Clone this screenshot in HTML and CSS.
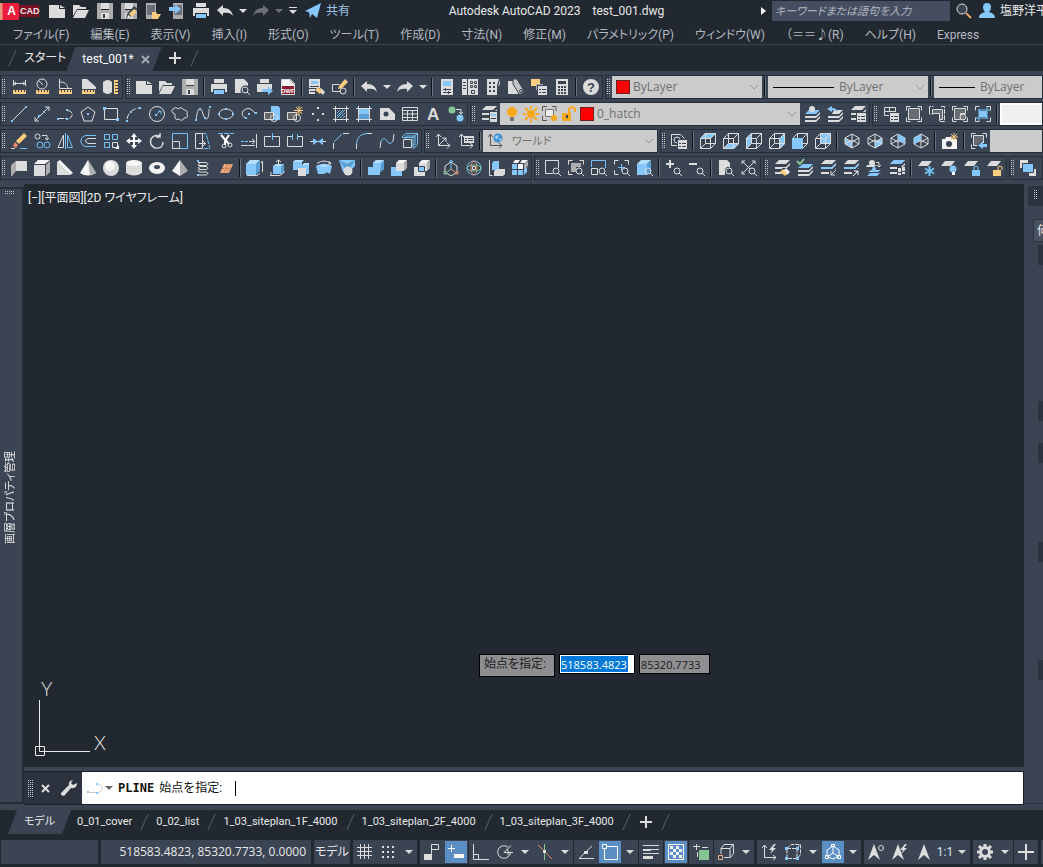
FILE: index.html
```html
<!DOCTYPE html>
<html lang="ja">

<head>
    <meta charset="utf-8">
    <title>Autodesk AutoCAD 2023 - test_001.dwg</title>
    <link rel="stylesheet" href="styles.css">
</head>

<body>
    <!-- shared icon parts -->
    <svg class="defs" aria-hidden="true">
        <defs>
            <path id="new" class="w" d="M0 2h10v4h6v9H0zM11 2l5 3h-5z"/>
            <path id="open" class="w" d="M0 13V2h6l2 2h5v2H4zM4 7h12l-4 8H0z"/>
            <g id="save"><path class="g" d="M0 0h4v7h8V0h4v16H0z"/><path class="w" d="M4 0h8v6H4zM4 10h8v6H4z"/><path class="k" d="M6 11h2v4H6z"/></g>
            <g id="print"><path class="w" d="M3 0h10v4H3zM0 5h16v8h-2v-3H2v3H0z"/><path class="bf" d="M3 11h10v4H3z"/></g>
            <path id="undo" class="w" d="M0 7l6-5v3c6 0 9 3 10 8-2-3-5-4-10-3v3z"/>
            <path id="redo" class="w" d="M16 7l-6-5v3C4 5 1 8 0 13c2-3 5-4 10-3v3z"/>
            <path id="drop" class="w" d="M0 6h8l-4 4z"/>
            <g id="mag"><circle cx="11" cy="11" r="3"/><path d="M13 13l3 3"/></g>
            <path id="slab" d="M1 6h11l4-4v2l-4 4H1z"/>
            <g id="layers" class="w"><path d="M5 0h11l-4 4H1z"/><use href="#slab" y="1"/><use href="#slab" y="6"/></g>
            <path id="corners" d="M.5 4.500v-4h4M11.500.5h4v4M15.500 11.500v4h-4M4.500 15.500h-4v-4"/>
            <g id="panel"><path class="k" d="M6 6h10v10H6z"/><path class="w" d="M7 7h9v9H7z"/><path class="k" d="M8 10h2v1H8zM11 10h4v1h-4zM8 13h2v1H8zM11 13h4v1h-4z"/></g>
            <path id="wire" d="M.5 5.500h10v10H.5zM5.500.5h10v10h-10zM.5 5.500l5-5M10.500 5.500l5-5M.5 15.500l5-5M10.500 15.500l5-5"/>
            <path id="iso" d="M8 1l7 4v6l-7 4-7-4V5zM1 5l7 4 7-4M8 9v6M1 11l7-4 7 4M8 7V1"/>
            <g id="solid"><path class="w" d="M0 5h11v11H0z"/><path class="l" d="M0 4l4-4h12l-5 4z"/><path class="g" d="M12 5l4-4v11l-4 4z"/></g>
            <g id="bluesolid"><path class="bf" d="M0 4h10v11H0z"/><path class="b2" d="M0 4l4-4h10l-4 4z"/><path class="b3" d="M10 4l4-4v11l-4 4z"/></g>
            <path id="ruler" class="o" d="M2 11h13v4H2z"/>
            <path id="ticks" class="s" d="M4.500 11v2M7.500 11v2M10.500 11v2M13.500 11v2"/>
            <g id="pencil"><path class="k" d="M6 11l7-8 4 3-8 9-4 1z"/><path class="o" d="M8 11l5-5 3 2-5 6z"/><path class="l" d="M7 12l3 2-4 2z"/></g>
            <path id="bolt" class="w" d="M13 0L8 6h3l-2 4 6-6h-3l3-4z"/>
            <path id="anno" class="w" d="M8 0l6 16-6-5-6 5z"/>
        </defs>
    </svg>

    <header class="titlebar">
        <div class="logo"><b>A</b><span>CAD</span></div>
        <nav class="quick" aria-label="クイック アクセス">
            <button title="新規"><svg><use href="#new"/></svg></button>
            <button title="開く"><svg><use href="#open"/></svg></button>
            <button title="上書き保存"><svg><use href="#save"/></svg></button>
            <button title="名前を付けて保存"><svg><use href="#save"/><use href="#pencil"/></svg></button>
            <button title="Web から開く"><svg><path class="g" d="M1 0h10v16H1z"/><path fill="#6b6f77" stroke="none" d="M2 2h8v10H2z"/><path class="o" d="M7 9h4l1 2h4l-3 5H7z"/></svg></button>
            <button title="Web に保存"><svg><path class="g" d="M4 0h10v16H4z"/><path fill="#6b6f77" stroke="none" d="M5 2h8v10H5z"/><path class="bf" d="M0 4h6V1l6 5-6 5V8H0z"/></svg></button>
            <button title="印刷"><svg><use href="#print"/></svg></button>
            <button title="元に戻す"><svg><use href="#undo"/></svg></button>
            <button class="mini" title="元に戻す履歴"><svg><use href="#drop"/></svg></button>
            <button class="dim" title="やり直し"><svg><use href="#redo"/></svg></button>
            <button class="mini dim" title="やり直し履歴"><svg><use href="#drop"/></svg></button>
            <button class="mini custom" title="カスタマイズ"><svg><path d="M0 4.500h8"/><path class="w" d="M0 7h8l-4 4z"/></svg></button>
            <button class="share"><svg><path class="bf" d="M0 8l16-8-4 15-5-4-2 4-1-6 9-6-7 7z"/></svg>共有</button>
        </nav>
        <h1><span>Autodesk AutoCAD 2023</span><span>test_001.dwg</span></h1>
        <button class="tri" title="検索を閉じる"><svg><path class="l" d="M0 4l5 4-5 4z"/></svg></button>
        <input class="search" type="text" aria-label="検索" placeholder="キーワードまたは語句を入力">
        <button title="検索"><svg><circle cx="6" cy="6" r="5" fill="#3b4453"/><path stroke="#e8a36a" stroke-width="2" d="M10 10l5 5"/></svg></button>
        <button class="user"><svg><path class="bf" d="M8 0c3 0 4 2 4 4s-1 4-2 5c3 1 6 2 6 6H0c0-4 3-5 6-6-1-1-2-3-2-5s1-4 4-4z"/></svg>塩野洋平</button>
    </header>

    <nav class="menu" aria-label="メニュー">
        <a href="#">ファイル(F)</a><a href="#">編集(E)</a><a href="#">表示(V)</a><a href="#">挿入(I)</a><a href="#">形式(O)</a><a href="#">ツール(T)</a><a href="#">作成(D)</a><a href="#">寸法(N)</a><a href="#">修正(M)</a><a href="#">パラメトリック(P)</a><a href="#">ウィンドウ(W)</a><a href="#">（＝＝♪(R)</a><a href="#">ヘルプ(H)</a><a href="#">Express</a>
    </nav>

    <nav class="filetabs" aria-label="図面">
        <i class="slash"></i>
        <a href="#">スタート</a>
        <div class="current"><a href="#">test_001*</a><button title="閉じる"><svg class="s10"><path stroke-width="2" d="M1 1l7 7M8 1L1 8"/></svg></button></div>
        <button class="plus" title="新しい図面"><svg class="s12"><path stroke-width="2" d="M6 0v12M0 6h12"/></svg></button>
        <i class="slash"></i>
    </nav>

    <section class="toolbars">
        <div class="row">
            <div class="bar">
                <i class="grip"></i>
                <button title="距離"><svg><path d="M2.500 1v6M14.500 1v6M3 4.500h11M5 3L3 4.500 5 6M12 3l2 1.500L12 6"/><use href="#ruler"/><use href="#ticks"/></svg></button>
                <button title="半径"><svg><circle cx="8" cy="5" r="5"/><path d="M4 1l5 5"/><use href="#ruler"/><use href="#ticks"/></svg></button>
                <button title="角度"><svg><path d="M2.500 0v9.500H15M3 3c5 0 7 2 8 6"/><use href="#ruler"/><use href="#ticks"/></svg></button>
                <button title="面積"><svg><path class="w" d="M2 0l5 0 9 8v2H2z"/><use href="#ruler"/><use href="#ticks"/></svg></button>
                <button title="体積"><svg><path class="w" d="M0 3q5-4 9 0v10q-4 4-9 0z"/><path class="o" d="M11 1h4v14h-4z"/><path class="s" d="M12 3.500h3M12 6.500h3M12 9.500h3M12 12.500h3"/></svg></button>
            </div>
            <div class="bar">
                <i class="grip"></i>
                <button title="新規作成"><svg><use href="#new"/></svg></button>
                <button title="開く"><svg><use href="#open"/></svg></button>
                <button title="保存"><svg><use href="#save"/></svg></button>
                <i class="sep"></i>
                <button title="印刷"><svg><use href="#print"/></svg></button>
                <button title="印刷プレビュー"><svg><path class="w" d="M1 0h9l4 4v3q-4-2-7 2-1 3 0 5H1z"/><use href="#mag"/></svg></button>
                <button title="パブリッシュ"><svg><path class="w" d="M3 0h9v4H3zM0 5h15v5H8v3H0z"/><path class="bf" d="M5 10h6V7l5 5-5 4v-3H5z"/></svg></button>
                <button title="3D DWF"><svg><path fill="#8b1c30" stroke="#d8d8d8" d="M1.500.5h9l4 4v11h-13z"/><path class="l" d="M2 1h8l4 4v2H2z"/><text x="1" y="14" class="dwf">DWF</text></svg></button>
                <i class="sep"></i>
                <button title="プロパティコピー"><svg><path class="w" d="M0 0h11v9H0zM0 10h6v5H0z"/><path class="bf" d="M2 2h7v3H2z"/><path class="k" d="M1 7h9v1H1zM1 12h5v1H1z"/><path class="w" d="M12 9l4 4-2 3-5-5z"/><path class="o" d="M9 8l4 4-2 3-5-4z"/></svg></button>
                <button title="ブロックエディタ"><svg><path d="M.5 5.500h7M.5 5.500v7h8"/><circle cx="11" cy="12" r="3"/><path class="o" d="M7 7l6-7 3 3-6 6-4 1z"/></svg></button>
                <i class="sep"></i>
                <button title="元に戻す"><svg><use href="#undo"/></svg></button>
                <button class="thin" title="履歴"><svg><use href="#drop"/></svg></button>
                <button title="やり直し"><svg><use href="#redo"/></svg></button>
                <button class="thin" title="履歴"><svg><use href="#drop"/></svg></button>
                <i class="sep"></i>
                <button title="プロパティ管理"><svg><path class="w" d="M2 0h12v16H2z"/><path class="bf" d="M4 2h8v5H4z"/><path class="s" d="M4 10.500h8M4 13.500h8M6.500 9v3M9.500 12v3"/></svg></button>
                <button title="DesignCenter"><svg><path class="w" d="M0 0h5v16H0zM6 0h10v16H6z"/><path class="k" d="M1 3h3v1H1zM1 6h3v1H1zM1 9h3v1H1z"/><path class="s" d="M8.500 2.500h2v2h-2zM12.500 2.500h2v2h-2zM8.500 6.500h2v2h-2zM12.500 6.500h2v2h-2zM9.500 11.500h3v3h-3z"/></svg></button>
                <button title="ツールパレット"><svg><path class="w" d="M2 0h12l-2 6v10H2zM13 8l2-3v-4z"/><path class="k" d="M4 3h2v2H4zM8 3h2v2H8zM4 7h2v2H4zM8 7h2v2H8zM4 11h2v2H4zM8 11h2v2H8z"/></svg></button>
                <button title="シートセット"><svg><path class="w" d="M0 2h5l9 13H0z"/><path fill="#c4c4c4" stroke="#3b4453" d="M5 0l4 0 7 12-2 3-3 0-6-10z"/><circle cx="13" cy="12" r="1.500" class="s"/></svg></button>
                <button title="マークアップ"><svg><path class="o" d="M0 0h9v7H0z"/><path class="g" d="M5 5h7v6H5z"/><use href="#panel"/></svg></button>
                <button title="計算機"><svg><path class="w" d="M2 0h12v16H2z"/><path class="k" d="M4 2h8v3H4zM4 7h2v2H4zM7 7h2v2H7zM10 7h2v2h-2zM4 10h2v2H4zM7 10h2v2H7zM10 10h2v2h-2zM4 13h2v2H4zM7 13h2v2H7zM10 13h2v2h-2z"/></svg></button>
                <i class="sep"></i>
                <button title="ヘルプ"><svg><circle class="w" cx="8" cy="8" r="8"/><text x="4" y="13" class="help">?</text></svg></button>
            </div>
            <div class="bar grow">
                <i class="grip"></i>
                <div class="combo c150"><i class="swatch"></i><select aria-label="色"><option>ByLayer</option></select><svg class="chev"><path d="M0 1l4 4 4-4"/></svg></div>
                <i class="sep"></i>
                <div class="combo c160"><i class="ltype"></i><select aria-label="線種"><option>ByLayer</option></select><svg class="chev"><path d="M0 1l4 4 4-4"/></svg></div>
                <i class="sep"></i>
                <div class="combo grow"><i class="ltype short"></i><select aria-label="線の太さ"><option>ByLayer</option></select></div>
            </div>
        </div>

        <div class="row">
            <div class="bar">
                <i class="grip"></i>
                <button title="線分"><svg><path d="M2 14L14 2"/><path class="bf" d="M0 14h2v2H0zM14 0h2v2h-2z"/></svg></button>
                <button title="構築線"><svg><path d="M1 15L15 1M1 11v4h4M11 1h4v4"/><path class="bf" d="M4 9h2v2H4zM9 5h2v2H9z"/></svg></button>
                <button title="ポリライン"><svg><path d="M2 12.500h8M11 4.500q5 1 4 5-1 3-4 3" stroke-dasharray="5 1"/><path class="bf" d="M0 12h2v2H0zM9 12h2v2H9zM9 3h2v2H9z"/></svg></button>
                <button title="ポリゴン"><svg><path d="M8 1l7 5-3 9H4L1 6z"/><path class="bf" d="M7 7h2v2H7z"/></svg></button>
                <button title="長方形"><svg><path d="M1.500 2.500h13v11h-13z"/><path class="bf" d="M0 1h3v3H0zM13 12h3v3h-3z"/></svg></button>
                <button title="円弧"><svg><path d="M1 13Q3 3 14 2" stroke-dasharray="6 2"/><path class="bf" d="M0 14h2v2H0zM4 5h2v2H4zM13 1h2v2h-2z"/></svg></button>
                <button title="円"><svg><circle cx="8" cy="8" r="7.500"/><path class="b" d="M7 9l4-4M9 5h3v3"/><path class="bf" d="M6 8h2v2H6z"/></svg></button>
                <button title="雲マーク"><svg><path d="M3 8Q-2 6 1 3q3-3 5 0 3-3 6 1 4 0 3 4 2 4-3 4-2 4-5 1-5 2-4-5z"/></svg></button>
                <button title="スプライン"><svg><path d="M1 14C3-1 6 1 8 8s6 8 6-5"/><path class="bf" d="M0 13h2v2H0zM4 2h2v2H4zM9 11h2v2H9zM14 0h2v2h-2z"/></svg></button>
                <button title="楕円"><svg><ellipse cx="8" cy="8" rx="7" ry="5"/><path class="bf" d="M0 7h2v2H0zM14 7h2v2h-2zM7 2h2v2H7zM7 12h2v2H7z"/></svg></button>
                <button title="楕円弧"><svg><path d="M5 12Q-1 10 2 5q6-6 12 2"/><path class="bf" d="M7 7h2v2H7zM4 11h2v2H4zM14 6h2v2h-2z"/></svg></button>
                <button title="ブロック挿入"><svg><path class="bf" d="M7 0h7l2 2v12h-9z"/><path d="M.5 6.500h9v7h-9z" fill="#666"/><circle cx="10" cy="12" r="3.500"/></svg></button>
                <button title="ブロック作成"><svg><path d="M.5 6.500h9v7h-9z" fill="#666"/><circle cx="10" cy="12" r="3.500"/><path class="os" d="M12 0v9M7 4.500h9M9 1l6 7M15 1L9 8"/></svg></button>
                <button title="点"><svg><path class="w" d="M7 1h2v2H7zM2 7h2v2H2zM12 7h2v2h-2zM7 13h2v2H7z"/></svg></button>
                <button title="ハッチング"><svg><path d="M2.500 0v16M13.500 0v16M0 2.500h16M0 13.500h16"/><path class="b" d="M4 7l3-3M4 10l6-6M4 12l8-8M7 12l5-5M10 12l2-2"/></svg></button>
                <button title="グラデーション"><svg><path class="bf" d="M3 3h10v5H3z"/><path class="b3" d="M3 8h10v5H3z"/><path d="M2.500 0v16M13.500 0v16M0 2.500h16M0 13.500h16"/></svg></button>
                <button title="リージョン"><svg><path class="w" d="M1 2h9l6 6v6H1z"/><circle class="k" cx="7" cy="8" r="2.500"/></svg></button>
                <button title="表"><svg><path d="M.5 1.500h15v13H.5zM0 4.500h16M0 8h16M0 11.500h16M5.500 4v10M10.500 4v10" /></svg></button>
                <button title="マルチテキスト"><svg><text x="2" y="14" class="mtext">A</text></svg></button>
                <button title="選択して追加"><svg><circle cx="4" cy="4" r="3.500" fill="#86c692" stroke="none"/><circle class="bf" cx="12" cy="12" r="3.500"/><path d="M8 3.500h5V7M11 6l2 2 2-2"/></svg></button>
            </div>
            <div class="bar">
                <i class="grip"></i>
                <button title="画層プロパティ管理"><svg><use href="#layers"/><path class="k" d="M8 5h8v11H8z"/><path class="w" d="M9 6h7v10H9z"/><path class="bf" d="M10 8h5v2h-5z"/><path class="k" d="M10 12h5v1h-5z"/></svg></button>
                <div class="combo layer">
                    <svg><circle cx="8" cy="6" r="5" fill="#f8a81c" stroke="none"/><path fill="#777" stroke="none" d="M6 11h4v4H6z"/></svg>
                    <svg><circle cx="8" cy="8" r="4" fill="#f8a81c" stroke="none"/><path stroke="#f8a81c" stroke-width="2" d="M8 0v3M8 13v3M0 8h3M13 8h3M2 2l3 3M11 11l3 3M14 2l-3 3M5 11l-3 3"/></svg>
                    <svg><path stroke="#555" d="M.5 5V.5H5M10 .5h4V5M.5 10v4.500H5"/><path fill="#eee" stroke="#777" d="M3.500 3.500h8v7h-8z"/><circle cx="12" cy="12" r="3" fill="#f8a81c" stroke="none"/></svg>
                    <svg><path fill="#f8a81c" stroke="none" d="M1 7h9v8H1z"/><path stroke="#f8a81c" stroke-width="2" d="M8 7V3q3-4 6 0v3"/><path class="k" d="M5 9h2v3H5z"/></svg>
                    <i class="swatch"></i><select aria-label="画層"><option>0_hatch</option></select><svg class="chev"><path d="M0 1l4 4 4-4"/></svg>
                </div>
                <button title="現在層に設定"><svg><use class="w" href="#slab" y="4"/><use class="w" href="#slab" y="8"/><path class="bf" d="M5 4h11l-4 4H1z"/><circle class="w" cx="8" cy="3" r="3"/></svg></button>
                <button title="前の画層"><svg><use href="#slab" class="w" y="4"/><use href="#slab" class="w" y="8"/><path class="w" d="M7 4h9l-4 4H5z"/><path class="bf" d="M0 3l5-3v2q5 0 5 4-2-2-5-2v2z"/></svg></button>
                <button title="画層状態管理"><svg><use href="#layers"/><use href="#panel"/></svg></button>
            </div>
            <div class="bar grow">
                <i class="grip"></i>
                <button title="ビューポート管理"><svg><path d="M1.500 1.500h11v8h-11zM6.500 2v8M2 5.500h11"/><use href="#panel"/></svg></button>
                <button title="単一ビューポート"><svg><use href="#corners"/><path d="M2.500 2.500h11v11h-11z" fill="#666b73"/></svg></button>
                <button title="ポリゴンビューポート"><svg><path d="M.5 4V.5h4M12 .5h3.500v15h-5v-4M.5 4V8h4" stroke-dasharray="5 1"/><path d="M3.500 3.500h10v10h-3v-6h-7z" fill="#666b73"/></svg></button>
                <button title="オブジェクト変換"><svg><use href="#corners"/><path d="M2.500 2.500h11v5h-5v6h-6z" fill="#666b73"/><circle cx="11" cy="11" r="3" fill="#777"/></svg></button>
                <button title="ビューポートクリップ"><svg><use href="#corners"/><path class="bf" d="M4 5h8v6H4z"/><path class="b" d="M3 4h12M1 12h12M4 3v12M12 1v12"/></svg></button>
                <i class="sep"></i>
                <input class="scale" type="text" aria-label="尺度">
            </div>
        </div>

        <div class="row">
            <div class="bar">
                <i class="grip"></i>
                <button title="削除"><svg><path class="o" d="M13 0l3 3-8 8-3-3z"/><path fill="#e9896a" stroke="none" d="M4 9l3 3-2 3-3-2z"/><path class="b" d="M9 15.500h7"/><path d="M0 15.500h4"/></svg></button>
                <button title="複写"><svg><circle cx="3.500" cy="3.500" r="2.500"/><circle class="b" cx="6" cy="12" r="3"/><circle class="b" cx="13" cy="12" r="3"/><path d="M8 2.500h5V6M11 5l2 2 2-2"/></svg></button>
                <button title="鏡像"><svg><path d="M6.500 2v12.500H1z"/><path class="b" d="M8.500 0v16M10.500 2v12.500h5z"/></svg></button>
                <button title="オフセット"><svg><path class="b" d="M16 2.500H6q-5 1-5 5.500t5 5.500h10"/><path d="M16 5.500H8q-5 2.500 0 5h8"/></svg></button>
                <button title="配列複写"><svg><path class="b" d="M1.500 1.500h5v5h-5zM9.500 1.500h5v5h-5zM1.500 9.500h5v5h-5z"/><path d="M9.500 9.500h5v5h-5z"/><path class="l" d="M16 12v4h-4z"/></svg></button>
                <button title="移動"><svg><path class="l" d="M8 0l3 4H5zM8 16l3-4H5zM0 8l4-3v6zM16 8l-4-3v6z"/><path stroke="#fff" stroke-width="2" d="M8 3v10M3 8h10"/></svg></button>
                <button title="回転"><svg><path stroke-width="1.500" d="M11 3Q5 1 2 6q-2 6 4 9 8 1 8-6M11 0v4H7"/></svg></button>
                <button title="尺度変更"><svg><path class="b" d="M.5 8V.5h15v15H8"/><path d="M.5 8.500h7v7h-7z"/></svg></button>
                <button title="ストレッチ"><svg><path d="M.5.5h7v15h-7zM4 10.500h6M8 8l2.500 2.500L8 13"/><path class="b" d="M8 .5h3l4 15H8" stroke-dasharray="4 1"/></svg></button>
                <button title="トリム"><svg><path class="b" d="M0 .5h16" stroke-dasharray="5 1"/><path stroke="#fff" stroke-width="2" d="M3 2l8 9M11 2L7 8v4"/><circle cx="12" cy="12" r="2"/><circle cx="6" cy="13" r="2"/></svg></button>
                <button title="延長"><svg><path d="M15.500 1v14M8 8.500h6M11 6l3 2.500L11 11M0 12.500h14" /><path class="b" d="M0 8.500h8" stroke-dasharray="3 1"/></svg></button>
                <button title="点で部分削除"><svg><path d="M7 3.500H.5v10h15v-10H9"/><path class="b" d="M8.500 0v7"/></svg></button>
                <button title="部分削除"><svg><path d="M5 3.500H.5v10h15v-10H11"/><path class="b" d="M5.500 1v6M10.500 1v6"/></svg></button>
                <button title="結合"><svg><path d="M0 8.500h16"/><path class="bf" d="M3 5l5 3.500L3 12zM13 5L8 8.500l5 3.500z"/></svg></button>
                <button title="面取り"><svg><path class="b" d="M1 9l8-8"/><path d="M.5 10v6M10 .5h6"/></svg></button>
                <button title="フィレット"><svg><path class="b" d="M.5 11Q1 1 11 .5"/><path d="M.5 11v5M11 .5h5"/></svg></button>
                <button title="ブレンド"><svg><path class="b" d="M2 8q3-5 6 0t6 0"/><path d="M1 15l1-7M14 8l1-7"/></svg></button>
                <button title="分解"><svg><path d="M1.500 6.500h8v8h-8z"/><path class="b" d="M0 4.500h11v11M0 4l4-3.500h11.500v11l-4 4M11 4.500l4.500-4M4 6V3h9v9h-2"/></svg></button>
            </div>
            <div class="bar">
                <i class="grip"></i>
                <button title="UCS"><svg><path d="M3.500 1v11.500H15M1 4l2.500-3L6 4M12 10l3 2.500-3 3M4 12l6-6M7 5h4v4"/></svg></button>
                <button title="UCS 管理"><svg><path d="M3.500 1v11.500H15M1 4l2.500-3L6 4M12 10l3 2.500-3 3"/><path class="w" d="M6 3h10v7H6z"/><path class="k" d="M7 5h2v1H7zM10 5h5v1h-5zM7 7h2v1H7zM10 7h5v1h-5z"/></svg></button>
                <i class="sep"></i>
                <div class="combo ucs"><svg><path stroke="#555" d="M3.500 1v11.500H15M1 4l2.500-3L6 4M12 10l3 2.500-3 3"/><circle cx="11" cy="5" r="4.500" fill="#3d8fd0" stroke="none"/><path fill="#9bd0f2" stroke="none" d="M8 3l4-1-1 3-2 2zM12 5l3 1-2 3z"/></svg><select aria-label="UCS 名"><option>ワールド</option></select><svg class="chev"><path d="M0 1l4 4 4-4"/></svg></div>
            </div>
            <div class="bar grow">
                <i class="grip"></i>
                <button title="ビュー管理"><svg><path d="M.5 1.500h9l4 4M.5 1.500v11H6"/><circle cx="6" cy="7" r="3"/><use href="#panel"/></svg></button>
                <i class="sep"></i>
                <button title="上面"><svg><path class="bf" d="M0 5l5-5h11l-5 5z"/><use href="#wire"/></svg></button>
                <button title="底面"><svg><path class="bf" d="M0 16l5-5h11l-5 5z"/><use href="#wire"/></svg></button>
                <button title="左側面"><svg><path class="bf" d="M0 5l5-5v11l-5 5z"/><use href="#wire"/></svg></button>
                <button title="右側面"><svg><path class="bf" d="M11 5l5-5v11l-5 5z"/><use href="#wire"/></svg></button>
                <button title="正面"><svg><use href="#wire"/><path class="bf" d="M0 5h11v11H0z"/></svg></button>
                <button title="背面"><svg><path class="bf" d="M5 0h11v11H5z"/><use href="#wire"/></svg></button>
                <i class="sep"></i>
                <button title="南西"><svg><path class="bf" d="M1 5l7 4v6l-7-4z"/><use href="#iso"/></svg></button>
                <button title="南東"><svg><path class="bf" d="M15 5L8 9v6l7-4z"/><use href="#iso"/></svg></button>
                <button title="北東"><svg><use href="#iso"/><path class="bf" d="M8 1l7 4v6L8 7z"/></svg></button>
                <button title="北西"><svg><use href="#iso"/><path class="bf" d="M8 1L1 5v6l7-4z"/></svg></button>
                <i class="sep"></i>
                <button title="カメラ"><svg><path class="l" d="M0 6h3l1-2h5l1 2h5v10H0z"/><circle class="k" cx="7" cy="11" r="3"/><path class="os" d="M12 0v8M8 4h8M9 1l6 6M15 1L9 7"/></svg></button>
                <i class="sep"></i>
                <button title="前のビュー"><svg><use href="#corners"/><path d="M2.500 2.500h10v10h-10z" fill="#666b73"/><path class="k" d="M6 12l6-5v3h4v6H9z"/><path class="bf" d="M16 11h-4V8l-5 4.500 5 3.500v-2h4z"/></svg></button>
                <div class="combo grow"></div>
            </div>
        </div>

        <div class="row">
            <div class="bar">
                <i class="grip"></i>
                <button title="ポリソリッド"><svg><path class="w" d="M5 1h11v10H5z"/><path class="g" d="M0 5l5-4v10l-4 5H0z"/></svg></button>
                <button title="直方体"><svg><use href="#solid"/></svg></button>
                <button title="くさび"><svg><path class="w" d="M0 2l13 13H0z"/><path class="l" d="M0 2l3-2 13 13-3 2z"/></svg></button>
                <button title="円錐"><svg><path class="l" d="M8 0l8 13q-8 5-16 0z"/><path class="g" d="M8 0l8 13q-3 2-6 2z"/></svg></button>
                <button title="球"><svg><circle class="w" cx="8" cy="8" r="8"/><circle class="l" cx="7" cy="6" r="5"/></svg></button>
                <button title="円柱"><svg><path class="w" d="M0 3h16v10q-8 5-16 0z"/><ellipse class="l" cx="8" cy="3" rx="8" ry="3"/></svg></button>
                <button title="トーラス"><svg><ellipse class="l" cx="8" cy="8" rx="8" ry="6"/><ellipse class="k" cx="8" cy="7" rx="3" ry="2"/></svg></button>
                <button title="角錐"><svg><path class="l" d="M8 0v16L0 11z"/><path class="g" d="M8 0l8 11-8 5z"/></svg></button>
                <button title="らせん"><svg><path d="M3 2.500h8q4 2 0 3H5q-4 0 0-2M5 9q-4-1 0-2.500h6q4 2 0 3H5q-4 1 0 2.500h6q4 1 0 3H3"/><path class="bf" d="M2 0h2v2H2zM2 14h2v2H2z"/></svg></button>
                <button title="平面サーフェス"><svg><path fill="#f0a878" stroke="none" d="M6 4h9l-4 9H2z"/><path stroke="#b57355" d="M4 8.500h9M9 4l-3 9M12 4l-3 9" stroke-dasharray="2 1"/></svg></button>
                <i class="sep"></i>
                <button title="押し出し"><svg><use href="#bluesolid" x="-1"/><path d="M15.500 1v11M14 3l1.500-2M0 15.500h10l3-2"/></svg></button>
                <button title="プレス"><svg><path class="bf" d="M3 6h8v8H3z"/><path class="b3" d="M11 6l3-2v8l-3 2z"/><path class="b2" d="M3 6l3-2h8l-3 2z"/><path d="M8.500 5V0M6 2l2.500-2L11 2M0 15.500h10l5-4M1 12v3"/></svg></button>
                <button title="スイープ"><svg><path class="bf" d="M0 2h9v8H0zM7 5h9v9H7z"/><path class="b2" d="M0 2l2-2h9l-2 2zM9 5l2-2h5v2z"/><path class="w" d="M5 8h8v8H5z"/></svg></button>
                <button title="回転"><svg><path class="bf" d="M0 6q8-5 16 0l-2 8q-3-3-6 0l-6 0z"/><path class="b2" d="M3 6q5-3 10 0-5 2-10 0z"/><path d="M1 3.500q7-5 14 0M13 1l2 3-3 0"/></svg></button>
                <button title="ロフト"><svg><path class="bf" d="M0 0h16v6l-4 4-8 2z"/><path class="b3" d="M0 0l8 4 8-4-5 9H6z"/><circle cx="9" cy="11" r="4.500" class="w"/></svg></button>
                <i class="sep"></i>
                <button title="和"><svg><path class="bf" d="M0 7h5V3l3-3h8v9l-4 3v3H0z"/><path class="b2" d="M5 3l3-3h8l-3 3z"/><path class="b3" d="M13 3l3-3v9l-4 3z"/></svg></button>
                <button title="差"><svg><path class="bf" d="M0 7h11v9H0z"/><path class="w" d="M5 3h8v8H5z"/><path class="l" d="M5 3l3-3h8l-3 3z"/><path class="g" d="M13 3l3-3v8l-3 3z"/></svg></button>
                <button title="交差"><svg><path class="w" d="M0 7h11v9H0z"/><path class="w" stroke="#3b4453" d="M5 3h8v8H5z"/><path class="l" d="M5 3l3-3h8l-3 3z"/><path class="g" d="M13 3l3-3v8l-3 3z"/><path fill="#85c6fb" stroke="#3b4453" d="M4.500 6.500h6v5h-6z"/></svg></button>
                <i class="sep"></i>
                <button title="3D 移動"><svg><path d="M8 2l6 4v6l-6 4-6-4V6z"/><path class="b" d="M8 9V0M6 2l2-2 2 2"/><path stroke="#e9896a" d="M8 9l7 5M15 11v3h-3"/><path stroke="#86c692" d="M8 9l-7 5M1 11v3h3"/></svg></button>
                <button title="3D 回転"><svg><circle cx="8" cy="8" r="7" class="b"/><ellipse cx="8" cy="8" rx="3" ry="7" stroke="#e9896a"/><ellipse cx="8" cy="8" rx="7" ry="3" stroke="#86c692"/><path d="M6.500 6.500h3v3h-3z"/></svg></button>
                <button title="3D 位置合わせ"><svg><path d="M.5 0v15.500h3"/><path class="bf" d="M3 3l2-2h5v9H3z"/><path class="w" d="M5 11l3-2h8v5l-2 2H5z"/></svg></button>
                <button title="3D 配列"><svg><path class="bf" d="M0 4h5v5H0zM6 10h5v5H6zM0 10h5v5H0zM12 9l3-2v5l-3 3z"/><path class="l" d="M6 4h5v5H6zM3 0h5L6 3H1zM10 0h6l-3 3H8z"/><path class="g" d="M12 4l4-3v5l-4 3z"/></svg></button>
            </div>
            <div class="bar">
                <i class="grip"></i>
                <button title="窓ズーム"><svg><path d="M8 13.500H.5V.5h13V8"/><use href="#mag"/></svg></button>
                <button title="ダイナミック"><svg><path d="M.5 4.500v-4h4M11.500.5h4v4M4.500 14.500h-4v-4"/><path class="g" d="M3 3h10v4H8v5H3z"/><use href="#mag"/></svg></button>
                <button title="尺度ズーム"><svg><path class="b" d="M.5 7V.5h14V8"/><path d="M.5 8.500h6v6h-6z"/><use href="#mag"/></svg></button>
                <button title="中心ズーム"><svg><path d="M.5 4.500v-4h4M10.500.5h4v4M4.500 14.500h-4v-4"/><path class="b" d="M7.500 4v7M4 7.500h7"/><use href="#mag"/></svg></button>
                <button title="選択ズーム"><svg><use href="#bluesolid"/><use href="#mag"/></svg></button>
                <i class="sep"></i>
                <button title="拡大"><svg><path stroke-width="2" d="M4 0v8M0 4h8"/><use href="#mag"/></svg></button>
                <button title="縮小"><svg><path stroke-width="2" d="M0 4h8"/><use href="#mag"/></svg></button>
                <i class="sep"></i>
                <button title="全体"><svg><path class="w" d="M1 0h8l3 3v4q-4-1-5 3v5H1z"/><use href="#mag"/></svg></button>
                <button title="範囲"><svg><path d="M1 1l8 8M14 1L1 14M1 4V1h3M11 1h3v3M1 11v3h3"/><use href="#mag"/></svg></button>
            </div>
            <div class="bar">
                <i class="grip"></i>
                <button title="画層プロパティコピー"><svg><use href="#layers"/><path class="k" d="M8 8h8v8H8z"/><path class="l" d="M12 8l4 4-3 3-4-4z"/><path class="o" d="M9 9l4 4-2 3-5-4z"/></svg></button>
                <button title="オブジェクトの画層"><svg><use class="w" href="#slab" y="4"/><use class="w" href="#slab" y="8"/><path class="bf" d="M6 4h10l-4 4H1z"/><path stroke="#86c692" stroke-width="2" d="M0 1l3 3 4-5"/></svg></button>
                <button title="画層を現在層へ"><svg><use href="#layers"/><use class="bf" href="#slab" y="1"/><path class="k" d="M9 9h7v7H9z"/><path d="M16 10l-5 5M11 11v4h4"/></svg></button>
                <button title="画層変更"><svg><use href="#layers"/><use class="bf" href="#slab" y="1"/><path class="k" d="M9 9h7v7H9z"/><path stroke="#fff" d="M10 16l5-5M11 11h4v4"/></svg></button>
                <button title="画層閲覧"><svg><circle class="w" cx="6" cy="3" r="3"/><path class="w" d="M1 5h10l-3 2H0z"/><path class="bf" d="M5 10h10l-3 2H2zM4 13h10l-3 3H1z"/><circle class="bf" cx="8" cy="9" r="2"/><path d="M10 2.500h3V6M11 5l2 2 2-2"/></svg></button>
                <button title="画層選択表示"><svg><use href="#layers"/><path class="bf" d="M5 0h11l-4 4H1z"/><path class="k" d="M8 7h8v9H8z"/><path class="w" d="M9 8h3v4H9zM9 13h3v2H9zM13 7h3v4h-3zM13 12h3v2h-3z"/></svg></button>
                <i class="sep"></i>
                <button title="フリーズ"><svg><path class="w" d="M4 1h10l-4 5H0z"/><path class="b" stroke-width="2" d="M11.500 6v10M7 8.500l9 5M16 8.500l-9 5"/></svg></button>
                <button title="非表示"><svg><path class="w" d="M4 1h10l-4 5H0z"/><circle class="bf" cx="12" cy="9" r="3.500"/><path class="l" d="M11 12h3v3h-3z"/></svg></button>
                <button title="ロック"><svg><path class="w" d="M4 1h10l-4 5H0z"/><path class="bf" d="M8 10h8v6H8z"/><path class="b" d="M10 10V7q2-2 4 0v3"/></svg></button>
                <button title="ロック解除"><svg><path class="w" d="M4 1h10l-4 5H0z"/><path class="o" d="M6 10h8v6H6z"/><path class="os" d="M11 10V7q2-2 4 0v3"/></svg></button>
            </div>
            <div class="bar grow">
                <i class="grip"></i>
                <button title="表示順序"><svg><path class="w" d="M0 0h8v8H0zM9 9h7v7H9z"/><path fill="#85c6fb" stroke="#3b4453" d="M2.500 3.500h11v9h-11z"/></svg></button>
            </div>
        </div>
    </section>

    <main>
        <aside class="palette">
            <i class="dots"></i>
            <span>画層プロパティ管理</span>
        </aside>
        <div class="work">
            <div class="canvas">
                <p>[−][平面図][2D ワイヤフレーム]</p>
                <form class="prompt">
                    <label for="px">始点を指定:</label>
                    <input id="px" class="x" type="text" value="518583.4823">
                    <input class="y" type="text" aria-label="Y" value="85320.7733">
                </form>
                <svg class="axes"><path d="M4.500 0v51.500H55M.5 46.500h9v9h-9z"/><text x="6" y="-4">Y</text><text x="59" y="50">X</text></svg>
            </div>
            <div class="command">
                <i class="grip"></i>
                <button title="閉じる"><svg class="s10"><path stroke-width="2" d="M1 1l7 7M8 1L1 8"/></svg></button>
                <button title="設定"><svg><path class="w" d="M0 13l8-8q-1-4 4-5l-2 3 2 2 4-2q0 6-6 5l-7 8-3-1z"/></svg></button>
                <label>
                    <svg class="cmd"><path stroke="#ccc" d="M2 12.500h8M11 4.500q5 1 4 5-1 3-4 3"/><path class="bf" d="M0 11h2v2H0zM9 12h2v2H9zM9 3h2v2H9z"/><path fill="#666" stroke="none" d="M18 6h8l-4 4z"/></svg>
                    <b>PLINE</b><span>始点を指定:</span><i class="caret"></i>
                    <input type="text" aria-label="コマンド">
                </label>
            </div>
        </div>
        <aside class="props">
            <div class="head"><i class="grip"></i></div>
            <button>何</button>
            <div class="groups"><i></i><i></i><i></i><i></i><i></i></div>
        </aside>
    </main>

    <footer>
        <nav class="layouts" aria-label="レイアウト">
            <a class="on" href="#">モデル</a>
            <a href="#">0_01_cover</a><i class="slash"></i>
            <a href="#">0_02_list</a><i class="slash"></i>
            <a href="#">1_03_siteplan_1F_4000</a><i class="slash"></i>
            <a href="#">1_03_siteplan_2F_4000</a><i class="slash"></i>
            <a href="#">1_03_siteplan_3F_4000</a><i class="slash"></i>
            <button title="新しいレイアウト"><svg class="s12"><path stroke-width="2" d="M6 0v12M0 6h12"/></svg></button><i class="slash"></i>
        </nav>
        <div class="status">
            <div class="cell empty"></div>
            <output class="cell coords">518583.4823, 85320.7733, 0.0000</output>
            <button class="cell model">モデル</button>
            <div class="set"><div class="cell">
                <button title="グリッド"><svg><path d="M3.500 0v15M7.500 0v15M11.500 0v15M0 3.500h15M0 7.500h15M0 11.500h15"/></svg></button>
                <button title="スナップ"><svg><path class="w" d="M1 2h2v2H1zM6 2h2v2H6zM11 2h2v2h-2zM1 7h2v2H1zM6 7h2v2H6zM11 7h2v2h-2zM1 12h2v2H1zM6 12h2v2H6zM11 12h2v2h-2z"/></svg></button>
                <button class="dd" title="スナップ設定"><svg><use href="#drop"/></svg></button>
            </div></div>
            <div class="set">
                <div class="cell">
                    <button title="推測拘束"><svg><path class="w" d="M0 10h8v6H0z"/><path d="M7.500 10V.5h7v5h-7"/></svg></button>
                    <button class="on" title="ダイナミック入力"><svg><path d="M3.500 1v7M0 4.500h7"/><path class="l" d="M6 10h10v4H6z"/></svg></button>
                </div>
                <div class="cell">
                    <button title="直交モード"><svg><path d="M.5 0v15.500H16M.5 10.500h5v5"/></svg></button>
                    <button title="極トラッキング"><svg><path d="M11 3Q6 0 2 4q-3 5 1 9 5 3 9-1 2-2 1-4M7 8.500l7-7M7 8.500h9M10 5q2 2 1 6"/></svg></button>
                    <button class="dd" title="極設定"><svg><use href="#drop"/></svg></button>
                    <button title="アイソメ"><svg><path stroke="#86c692" d="M7.500 0v16"/><path stroke="#e9896a" d="M1 1l14 14"/><path class="w" d="M6 6h3v3H6z"/></svg></button>
                    <button class="dd" title="アイソメ設定"><svg><use href="#drop"/></svg></button>
                </div>
                <div class="cell">
                    <button title="オブジェクト追跡"><svg><path d="M14 2L1 14.500h15"/><path class="w" d="M6 7h4v3H6z"/></svg></button>
                    <button class="on" title="オブジェクトスナップ"><svg><path d="M5 2.500h10.500v13H2.500V5M.5.5h4v4h-4z"/></svg></button>
                    <button class="dd" title="スナップ設定"><svg><use href="#drop"/></svg></button>
                </div>
                <div class="cell"><button title="線の太さ"><svg><path class="w" d="M0 1h16v1H0zM0 5h8v2H0zM8 5h8v1H8zM0 9h16v1H0zM0 12h10v3H0z"/></svg></button></div>
                <div class="cell"><button class="on" title="透過性"><svg><path d="M.5.5h15v15H.5z"/><path class="l" d="M2 2h3v3H2zM8 2h3v3H8zM5 5h3v3H5zM11 5h3v3h-3zM2 8h3v3H2zM8 8h3v3H8zM5 11h3v3H5zM11 11h3v3h-3z"/></svg></button></div>
                <div class="cell"><button title="選択の循環"><svg><path fill="#86c692" stroke="none" d="M6 6h10v10H6z"/><path d="M3.500 0v6M0 2.500h7M9 3.500h6M4.500 8v5"/></svg></button></div>
                <div class="cell">
                    <button title="3D オブジェクトスナップ"><svg><path d="M3 10V4.500h9v9H6M3 4.500l3-4h9.500v9l-3 4M12 4.500l3-4"/><path stroke="#f3b183" d="M.5 11.500h4v4h-4z"/></svg></button>
                    <button class="dd" title="3D 設定"><svg><use href="#drop"/></svg></button>
                </div>
            </div>
            <div class="set"><div class="cell">
                <button title="ダイナミック UCS"><svg><path d="M3.500 1v12.500H15M1 4l2.500-3L6 4M12 11l3 2.500-3 2.500"/><use href="#bolt"/></svg></button>
                <button title="選択フィルタ"><svg><path d="M2 4.500h10v10H2zM2 4.500l4-4h9.500v10l-3 4M12 4.500l3-4" stroke-dasharray="4 1"/><path class="bf" d="M0 3h3v3H0zM11 3h3v3h-3zM0 13h3v3H0zM11 13h3v3h-3z"/></svg></button>
                <button class="dd" title="フィルタ設定"><svg><use href="#drop"/></svg></button>
                <button class="on" title="ギズモ"><svg><path d="M8 2l6 4v6l-6 3-6-3V6zM8 2v7l6 4M8 9l-6 4M6.500.5h3v2h-3zM.5 11.500h3v3h-3zM12.500 11.500h3v3h-3z"/></svg></button>
                <button class="dd" title="ギズモ設定"><svg><use href="#drop"/></svg></button>
            </div></div>
            <div class="set"><div class="cell">
                <button title="注釈表示"><svg><use href="#anno" x="-2"/><circle cx="13" cy="4" r="2.500"/></svg></button>
                <button title="自動尺度"><svg><use href="#anno" x="-2"/><use href="#bolt"/></svg></button>
                <button title="注釈尺度"><svg><use href="#anno"/></svg></button>
                <button class="ratio">1:1</button>
                <button class="dd" title="尺度一覧"><svg><use href="#drop"/></svg></button>
            </div></div>
            <div class="set">
                <div class="cell">
                    <button title="ワークスペース"><svg><circle cx="8" cy="8" r="4.500" stroke-width="3"/><path stroke-width="3" d="M8 0v3M8 13v3M0 8h3M13 8h3M2 2l3 3M11 11l3 3M14 2l-3 3M5 11l-3 3"/></svg></button>
                    <button class="dd" title="ワークスペース設定"><svg><use href="#drop"/></svg></button>
                </div>
                <div class="cell"><button title="注釈モニター"><svg><path stroke-width="2" d="M8 0v16M0 8h16"/></svg></button></div>
            </div>
            <div class="cell rest"></div>
        </div>
    </footer>
</body>

</html>
```
FILE: styles.css
```css
html,
body {
    margin: 0;
    height: 100%;
}

body {
    display: flex;
    flex-direction: column;
    overflow: hidden;
    background: #212830;
    color: #e8e8e8;
    font-family: Roboto, "Noto Sans CJK JP", sans-serif;
    font-size: 12px;
    font-feature-settings: "palt";
    line-height: 16px;
    white-space: nowrap;
}

a {
    color: inherit;
    text-decoration: none;
}

button,
input,
select {
    font: inherit;
    font-feature-settings: inherit;
    color: inherit;
    border: none;
    padding: 0;
    margin: 0;
    background: none;
    border-radius: 0;
    outline: none;
}

button {
    display: flex;
    align-items: center;
    justify-content: center;
    flex: none;
}

/* icons */
svg {
    width: 16px;
    height: 16px;
    flex: none;
    fill: none;
    stroke: #dcdcdc;
    overflow: visible;
}

.defs {
    display: none;
}

.s10 {
    width: 9px;
    height: 9px;
}

.s12 {
    width: 12px;
    height: 12px;
}

.w { fill: #dcdcdc; stroke: none; }
.l { fill: #f6f6f6; stroke: none; }
.g { fill: #adadad; stroke: none; }
.k { fill: #3b4453; stroke: none; }
.s { stroke: #3b4453; }
.b { stroke: #74c2f5; }
.bf { fill: #85c6fb; stroke: none; }
.b2 { fill: #b5ddfc; stroke: none; }
.b3 { fill: #5a9fd4; stroke: none; }
.o { fill: #fdcd7f; stroke: none; }
.os { stroke: #fdcd7f; }

.dwf,
.help,
.mtext {
    fill: #fff;
    stroke: none;
    font: bold 6px "Liberation Sans", sans-serif;
}

.help {
    fill: #3b4453;
    font-size: 13px;
}

.mtext {
    fill: #dcdcdc;
    font-size: 17px;
}

/* title bar */
.titlebar {
    display: flex;
    align-items: center;
    height: 22px;
    flex: none;
}

.logo {
    display: flex;
    align-items: center;
    width: 45px;
    font-family: "Liberation Sans", sans-serif;

    & b {
        width: 15px;
        padding-left: 4px;
        line-height: 17px;
        text-align: center;
        background: linear-gradient(90deg, #e59a7b 2px, #ea1d3d 3px);
        color: #fff;
    }

    & span {
        background: #7b1024;
        font-size: 9px;
        font-weight: bold;
        line-height: 12px;
        padding: 0 0 0 1px;
        width: 19px;
    }
}

.quick {
    display: flex;

    & button {
        width: 24px;
    }

    & .mini {
        width: 12px;
    }

    & .mini svg {
        width: 8px;
    }

    & .custom {
        margin: 0 6px 0 2px;
    }

    & .share {
        width: auto;
        gap: 5px;
        color: #9cc3e6;
    }
}

.dim {
    opacity: 0.4;
}

h1 {
    display: flex;
    justify-content: center;
    gap: 12px;
    flex: 1;
    margin: 0;
    padding-left: 4px;
    font-size: 12px;
    font-weight: normal;
}

.tri {
    width: 10px;

    & svg {
        width: 5px;
    }
}

.search {
    width: 178px;
    height: 20px;
    padding-left: 3px;
    box-sizing: border-box;
    background: #444e60;
    margin: 0 6px 0 3px;
    font-size: 11px;
    font-style: italic;

    &::placeholder {
        color: #b4bac4;
    }
}

.user {
    margin: 0 -5px 0 7px;
    gap: 5px;
}

.menu {
    display: flex;
    align-items: center;
    gap: 21px;
    height: 18px;
    padding: 4px 13px 0;
    flex: none;
    color: #b4b9c1;
    border-bottom: 1px solid #3b4453;
}

/* drawing tabs */
.slash {
    width: 1px;
    height: 16px;
    background: #5a616d;
    transform: skewX(-24deg);
}

.filetabs {
    display: flex;
    align-items: center;
    height: 26px;
    flex: none;
    padding-left: 12px;

    & > a {
        padding-left: 11px;
    }

    & .current {
        display: flex;
        align-items: center;
        align-self: flex-end;
        height: 24px;
        gap: 7px;
        padding: 0 12px 0 16px;
        background: #3b4453;
        clip-path: polygon(9px 0, 100% 0, calc(100% - 9px) 100%, 0 100%);
    }

    & .plus {
        margin: 0 13px 0 7px;
    }
}

.current a {
    color: #fff;
}

.current svg {
    stroke: #a4a9b1;
}

/* toolbars */
.toolbars {
    display: flex;
    flex-direction: column;
    gap: 3px;
    flex: none;
    padding: 4px 0;
    background: #3b4453;
}

.row {
    display: flex;
    gap: 2px;
    height: 24px;
}

.bar {
    display: flex;
    flex: none;
    border: 1px solid #262d38;
    box-sizing: border-box;

    & > button {
        width: 23px;
    }

    & > .thin {
        width: 13px;
    }

    & > .thin svg {
        width: 8px;
    }
}

.bar.grow,
.combo.grow {
    flex: 1;
    min-width: 0;
}

.grip {
    width: 4px;
    height: 15px;
    margin: 3px 1px;
    flex: none;
    background: repeating-linear-gradient(90deg, #c9ccd1 0 1px, transparent 1px 2px);
    mask: repeating-linear-gradient(#000 0 1px, transparent 1px 2px);
}

.sep {
    width: 1px;
    height: 18px;
    margin: 2px;
    flex: none;
    background: #0e1116;
    border-right: 1px solid #6b7280;
}

.combo {
    display: flex;
    align-items: center;
    flex: none;
    box-sizing: border-box;
    padding: 0 4px;
    gap: 3px;
    background: #cbcbcb;
    color: #707070;
    font-family: "Open Sans", "Noto Sans CJK JP", sans-serif;

    & select {
        appearance: none;
        flex: 1;
        min-width: 0;
    }
}

.c150 { width: 150px; }
.c160 { width: 160px; }
.layer { width: 300px; }
.ucs { width: 174px; }

.ucs select {
    font-size: 11px;
    padding-left: 6px;
}

.swatch {
    width: 12px;
    height: 12px;
    background: #f00;
    border: 1px solid #6b2020;
}

.ltype {
    width: 61px;
    height: 1px;
    background: #000;
    margin: 0 2px 0 1px;
}

.ltype.short {
    width: 36px;
}

.chev {
    width: 8px;
    height: 6px;
    stroke: #9a9a9a;
    pointer-events: none;
}

.scale {
    flex: 1;
    min-width: 0;
    background: #f0f0f0;
    border: 2px solid #fff;
    border-right: none;
}

/* drawing area */
main {
    display: flex;
    flex: 1;
    min-height: 0;
    background: #3b4453;
}

.palette {
    display: flex;
    flex-direction: column;
    width: 22px;
    margin: 3px 0 6px;
    border: solid #262d38;
    border-width: 2px 2px 2px 0;

    & .dots {
        width: 9px;
        height: 3px;
        margin: 2px 0 0 5px;
        background: repeating-linear-gradient(90deg, #c9ccd1 0 1px, transparent 1px 2px);
        mask: repeating-linear-gradient(#000 0 1px, transparent 1px 2px);
    }

    & span {
        margin: auto 3px;
        font-size: 11px;
        writing-mode: vertical-rl;
        text-orientation: sideways;
        transform: rotate(180deg);
    }
}

.work {
    display: flex;
    flex-direction: column;
    flex: 1;
    min-width: 0;
}

.canvas {
    position: relative;
    flex: 1;
    background: #212830;

    & p {
        margin: 6px 4px;
        color: #f0f0f0;
    }
}

.prompt {
    position: absolute;
    left: 455px;
    top: 470px;
    display: flex;
    align-items: flex-start;
    gap: 4px;
    color: #1c1c1c;
    line-height: 18px;

    & label,
    & input {
        border: 1px solid #000;
        background: #8e8e90;
        box-sizing: border-box;
    }

    & label {
        height: 23px;
        width: 76px;
        padding-left: 4px;
    }

    & input {
        width: 76px;
        height: 20px;
        padding-left: 1px;
        font-family: "Open Sans", sans-serif;
        font-size: 11px;
    }

    & .x {
        color: #fff;
        background: linear-gradient(#0078d7, #0078d7) 1px 1px / 67px 16px no-repeat #fff;
    }

    & .y {
        width: 71px;
    }
}

.axes {
    position: absolute;
    left: 11px;
    bottom: 11px;
    width: 80px;
    height: 56px;
    stroke: #e8e8e8;

    & text {
        fill: #e8e8e8;
        stroke: none;
        font: 300 19px Lato, sans-serif;
    }
}

.command {
    display: flex;
    align-items: center;
    height: 34px;
    margin: 4px 0 5px;
    flex: none;
    background: #2d333e;
    box-sizing: border-box;
    border: 1px solid #1d232c;
    border-left: none;

    & .grip {
        width: 5px;
        height: 17px;
        margin: 0 0 0 4px;
    }

    & button {
        width: 24px;
    }

    & label {
        display: flex;
        align-items: center;
        flex: 1;
        align-self: stretch;
        margin-left: 1px;
        padding-left: 5px;
        background: #fff;
        color: #111;
        border-radius: 1px;
        font-feature-settings: normal;
    }

    & .cmd {
        width: 27px;
        margin-right: 4px;
    }

    & b {
        font-family: "DejaVu Sans Mono", monospace;
        font-size: 12px;
        margin-right: 5px;
    }

    & input {
        flex: 1;
    }
}

.caret {
    width: 1px;
    height: 15px;
    margin-left: 13px;
    background: #000;
}

.props {
    width: 19px;
    flex: none;
    box-sizing: border-box;
    margin-bottom: 6px;
    border-bottom: 1px solid #2d333e;
    overflow: hidden;

    & .head {
        height: 20px;
        margin: 2px 0 13px 4px;
        padding: 1px 5px 0;
        box-sizing: border-box;
        background: #2d333e;
        border-radius: 3px 0 0 0;
    }

    & .head .grip {
        display: block;
        height: 9px;
    }

    & button {
        height: 23px;
        margin-left: 9px;
        padding: 0 4px 0 3px;
        border: 1px solid #2d333e;
        background: #4a5262;
    }
}

.groups {
    display: flex;
    flex-direction: column;
    margin: 3px 0 0 14px;

    & i {
        height: 20px;
        margin-bottom: 79px;
        background: #2d333e;
    }

    & i:nth-child(1) {
        margin-bottom: 136px;
    }

    & i:nth-child(2) {
        margin-bottom: 22px;
    }

    & i:nth-child(4) {
        margin-bottom: 98px;
    }
}

/* layout tabs and status bar */
footer {
    flex: none;
    padding-bottom: 3px;
}

.layouts {
    display: flex;
    align-items: center;
    height: 24px;
    margin-bottom: 6px;
    font-size: 11px;

    & a {
        padding: 0 12px 0 11px;
    }

    & .on {
        margin: 0 -5px 0 8px;
        padding: 0 16px;
        line-height: 24px;
        background: #3b4453;
        clip-path: polygon(9px 0, 100% 0, calc(100% - 9px) 100%, 0 100%);
    }

    & button {
        margin: 0 13px;
    }
}

.status {
    display: flex;
    height: 24px;
    gap: 3px;

    & .set {
        display: flex;
        gap: 1px;
        flex: none;
    }

    & .cell {
        display: flex;
        flex: none;
        background: #3b4453;
    }

    & .cell button {
        width: 24px;
    }

    & .cell .dd {
        width: 16px;
    }

    & .dd svg {
        width: 8px;
    }

    & .cell .ratio {
        width: 18px;
        color: #cfe4f7;
    }

    & .cell .on {
        background: #5b8fc4;
        border: 1px solid #3b4453;
        box-sizing: border-box;
    }

    & .on svg {
        stroke: #fff;
    }

    & .empty {
        width: 97px;
        margin-left: 1px;
    }

    & .coords {
        width: 205px;
        padding-right: 5px;
        align-items: center;
        justify-content: flex-end;
        font-family: "Open Sans", sans-serif;
    }

    & .model {
        width: 36px;
    }

    & .rest {
        flex: 1;
    }
}
```
